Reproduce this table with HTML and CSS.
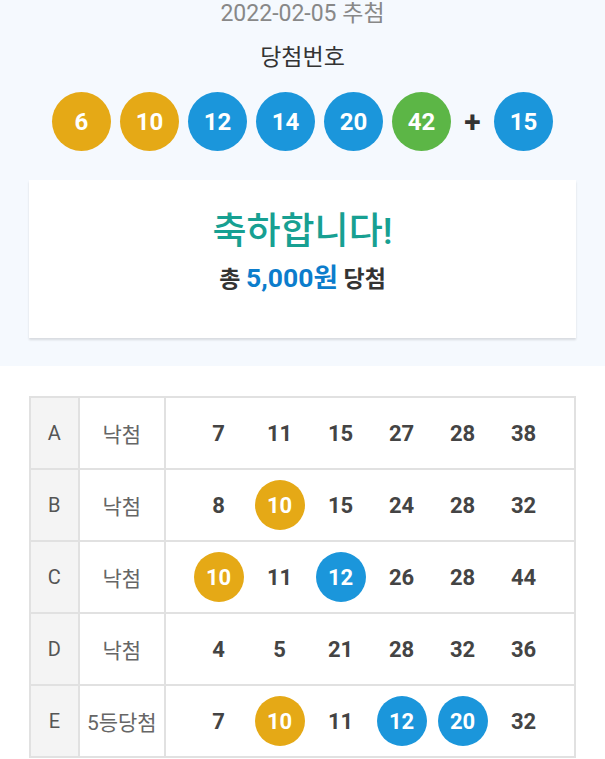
FILE: index.html
```html
<!DOCTYPE html>
<html lang="ko">
<head>
  <meta charset="UTF-8">
  <title>로또 당첨 확인</title>
  <link rel="stylesheet" href="styles.css">
</head>
<body>

  <!-- Draw summary -->
  <div class="summary">
    <div class="draw-date">2022-02-05 추첨</div>
    <div class="draw-title">당첨번호</div>

    <div class="win-balls">
      <span class="ball yellow">6</span>
      <span class="ball yellow">10</span>
      <span class="ball blue">12</span>
      <span class="ball blue">14</span>
      <span class="ball blue">20</span>
      <span class="ball green">42</span>
      <span class="plus">+</span>
      <span class="ball blue">15</span>
    </div>

    <div class="result-card">
      <div class="result-title">축하합니다!</div>
      <div class="result-total">총 <span class="amount">5,000원</span> 당첨</div>
    </div>
  </div>

  <!-- My tickets -->
  <table class="tickets">
    <tr>
      <td class="slot">A</td>
      <td class="rank">낙첨</td>
      <td class="nums">
        <div class="num-row">
          <span class="num">7</span><span class="num">11</span><span class="num">15</span>
          <span class="num">27</span><span class="num">28</span><span class="num">38</span>
        </div>
      </td>
    </tr>
    <tr>
      <td class="slot">B</td>
      <td class="rank">낙첨</td>
      <td class="nums">
        <div class="num-row">
          <span class="num">8</span><span class="num hit yellow">10</span><span class="num">15</span>
          <span class="num">24</span><span class="num">28</span><span class="num">32</span>
        </div>
      </td>
    </tr>
    <tr>
      <td class="slot">C</td>
      <td class="rank">낙첨</td>
      <td class="nums">
        <div class="num-row">
          <span class="num hit yellow">10</span><span class="num">11</span><span class="num hit blue">12</span>
          <span class="num">26</span><span class="num">28</span><span class="num">44</span>
        </div>
      </td>
    </tr>
    <tr>
      <td class="slot">D</td>
      <td class="rank">낙첨</td>
      <td class="nums">
        <div class="num-row">
          <span class="num">4</span><span class="num">5</span><span class="num">21</span>
          <span class="num">28</span><span class="num">32</span><span class="num">36</span>
        </div>
      </td>
    </tr>
    <tr>
      <td class="slot">E</td>
      <td class="rank">5등당첨</td>
      <td class="nums">
        <div class="num-row">
          <span class="num">7</span><span class="num hit yellow">10</span><span class="num">11</span>
          <span class="num hit blue">12</span><span class="num hit blue">20</span><span class="num">32</span>
        </div>
      </td>
    </tr>
  </table>

</body>
</html>
```

FILE: styles.css
```css
/* Page base */
html, body {
  margin: 0;
  padding: 0;
  background: #fff;
  font-family: Roboto, "Noto Sans CJK KR", sans-serif;
  color: #333;
}

/******************************************************
 * SUMMARY (draw info + winning numbers)
 ******************************************************/
.summary {
  background: #f5f9fe;
  padding: 0 29px 28px;
  text-align: center;
}
.draw-date {
  font-size: 23px;
  line-height: 28px;
  color: #888;
}
.draw-title {
  margin-top: 15px;
  font-size: 23px;
  line-height: 30px;
  color: #333;
}

.win-balls {
  display: flex;
  justify-content: center;
  align-items: center;
  gap: 9px;
  margin-top: 19px;
}
.ball {
  width: 59px;
  height: 59px;
  border-radius: 50%;
  display: flex;
  align-items: center;
  justify-content: center;
  color: #fff;
  font-size: 24px;
  font-weight: bold;
}
.plus {
  width: 25px;
  font-size: 30px;
  font-weight: bold;
  color: #333;
}

/* Ball colors */
.yellow { background: #e5a916; }
.blue   { background: #1b96db; }
.green  { background: #5cb646; }

/* Result card */
.result-card {
  margin-top: 29px;
  background: #fff;
  box-shadow: 0 2px 2px rgba(0, 0, 0, 0.12);
  padding: 30px 0 42px;
}
.result-title {
  font-size: 37px;
  line-height: 44px;
  font-weight: 500;
  color: #17a092;
}
.result-total {
  margin-top: 10px;
  font-size: 23px;
  line-height: 32px;
  font-weight: bold;
  color: #333;
}
.amount {
  font-size: 26.5px;
  line-height: 1;
  color: #0c7dcc;
}

/******************************************************
 * TICKETS TABLE
 ******************************************************/
.tickets {
  margin: 30px 29px 0;
  width: 547px;
  border-collapse: collapse;
}
.tickets td {
  border: 2px solid #e1e1e1;
  height: 70px;
  padding: 0;
  text-align: center;
}
.slot {
  width: 48px;
  background: #f4f4f4;
  font-size: 20px;
  color: #555;
}
.rank {
  width: 87px;
  font-size: 21px;
  color: #666;
}
.nums {
  padding: 0 20px 0 22px !important;
}
.num-row {
  display: flex;
}
.num {
  width: 61px;
  height: 50px;
  display: flex;
  align-items: center;
  justify-content: center;
  font-size: 22px;
  font-weight: bold;
  color: #444;
}
.num.hit {
  width: 50px;
  margin: 0 5.5px;
  border-radius: 50%;
  color: #fff;
}
```
